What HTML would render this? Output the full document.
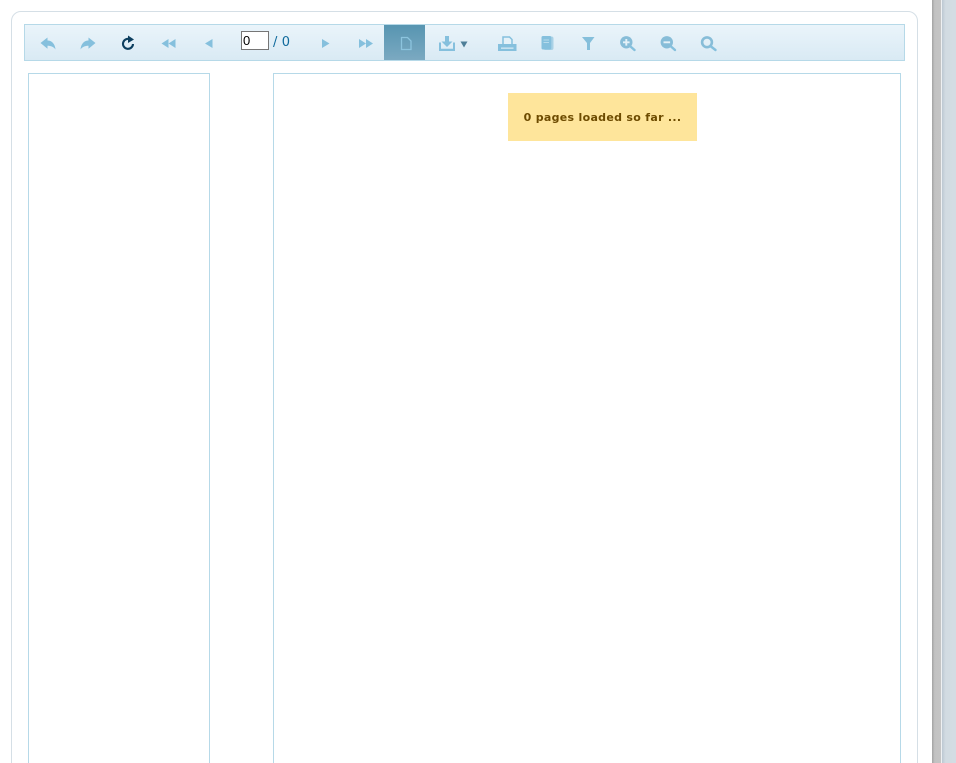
<!DOCTYPE html>
<html>
<head>
<meta charset="utf-8">
<style>
html,body{margin:0;padding:0;background:#fff;width:956px;height:763px;overflow:hidden;font-family:"DejaVu Sans","Liberation Sans",sans-serif}
#root{position:relative;width:956px;height:763px;overflow:hidden;background:#fff}
#root div,#root svg,#root input{position:absolute;box-sizing:border-box}
#card{left:11px;top:11px;width:907px;height:780px;border:1px solid #d5dfe6;border-radius:10px;background:#fff}
#bar{left:24px;top:24px;width:881px;height:37px;border:1px solid #b6d9e8;background:linear-gradient(#eaf4fa,#d9eaf4)}
#active{left:384px;top:25px;width:41px;height:35px;background:linear-gradient(#5795b1,#7ba9c1)}
#left{left:28px;top:73px;width:182px;height:720px;border:1px solid #b6d9e8;background:#fff}
#right{left:273px;top:73px;width:628px;height:720px;border:1px solid #b6d9e8;background:#fff}
#msg{left:508px;top:93px;width:189px;height:48px;background:#fee59b;color:#6d4b00;font-weight:bold;font-size:11px;letter-spacing:.3px;line-height:49px;text-align:center;white-space:nowrap}
#pg{left:241px;top:31px;width:28px;height:19px;border:1px solid #767676;background:#fff;font:13px "Liberation Sans",sans-serif;color:#000;padding:0 1px;margin:0;outline:0;border-radius:0}
#tot{left:273px;top:35px;font-size:13px;line-height:16px;letter-spacing:.1px;color:#0f6a9c;white-space:nowrap}
#s1{left:932px;top:0;width:9px;height:763px;background:linear-gradient(90deg,#a3a3a3,#c2c2c2 30%,#c4c4c4)}
#s2{left:941px;top:0;width:1px;height:763px;background:#eef0f2}
#s3{left:942px;top:0;width:14px;height:763px;background:linear-gradient(90deg,#bcc7d2,#d2dbe2 25%,#d3dce3)}
</style>
</head>
<body>
<div id="root">
<div id="card"></div>
<div id="bar"></div>
<div id="active"></div>
<div id="left"></div>
<div id="right"></div>
<div id="msg">0 pages loaded so far ...</div>
<input id="pg" type="text" value="0">
<div id="tot">/ 0</div>
<svg style="left:0;top:0" width="932" height="70" viewBox="0 0 932 70">
<g fill="#85c0dd">
<!-- undo -->
<path d="M40.500 43 L47.500 37.500 V40.500 C52 40.500 55 44 55.500 49.500 C53.500 46.800 51 45.800 47.500 45.800 V48.800 Z"/>
<!-- redo -->
<path d="M95.500 43 L88.500 37.500 V40.500 C84 40.500 81 44 80.500 49.500 C82.500 46.800 85 45.800 88.500 45.800 V48.800 Z"/>
<!-- first -->
<path d="M161.500 43.500 L168.500 39 V48 Z M168.500 43.500 L175.500 39 V48 Z"/>
<!-- prev -->
<path d="M205 43.500 L212.500 39 V48 Z"/>
<!-- next -->
<path d="M329.500 43.500 L322 39 V48 Z"/>
<!-- last -->
<path d="M366 43.500 L359 39 V48 Z M373 43.500 L366 39 V48 Z"/>
</g>
<!-- refresh -->
<path d="M130.500 39.500 A5 5 0 1 0 133 44" fill="none" stroke="#0d3f5f" stroke-width="2.100"/>
<path d="M128 35.500 L134 39.500 L128 43 Z" fill="#0d3f5f"/>
<!-- page (active) -->
<path d="M401.500 37.500 H407.500 L411 41 V49.500 H401.500 Z" fill="none" stroke="#8cc4de" stroke-width="1.300"/>
<!-- download -->
<g fill="#85c0dd">
<path d="M445 36 H449 V41.500 H452.500 L447 47 L441.500 41.500 H445 Z"/>
<path d="M439 42.500 H441 V48.800 H453 V42.500 H455 V51 H439 Z"/>
</g>
<path d="M460.500 41.500 H467.500 L464 47.500 Z" fill="#4e7f98"/>
<!-- print -->
<path d="M503 44 V37 H509.500 L512 39.500 V44" fill="#e4f1f8" stroke="#85c0dd" stroke-width="1.500"/>
<path d="M498 44 H516.500 V51 H498 Z" fill="#85c0dd"/>
<rect x="501" y="47.500" width="12.500" height="1.300" fill="#d5e9f3"/>
<!-- document copies -->
<rect x="543.500" y="36.500" width="10" height="13.500" rx="2" fill="#a9d2e6"/>
<rect x="541.500" y="36" width="9.800" height="13.500" rx="1.500" fill="#85c0dd"/>
<rect x="543.500" y="39.500" width="5.500" height="1" fill="#b7dbec"/>
<rect x="543.500" y="42" width="5.500" height="1" fill="#b7dbec"/>
<!-- filter -->
<path d="M582 37 H594.500 L590 43 V50 H587 V43 Z" fill="#85bfdb"/>
<!-- zoom in -->
<circle cx="626.300" cy="42.300" r="6.200" fill="#87bdd8"/>
<path d="M630.500 46.500 L634.500 50" fill="none" stroke="#85c0dd" stroke-width="2.400" stroke-linecap="round"/>
<path d="M623 42.300 H629.600 M626.300 39 V45.600" stroke="#e4f1f8" stroke-width="1.900" fill="none"/>
<!-- zoom out -->
<circle cx="666.800" cy="42.300" r="6.200" fill="#87bdd8"/>
<path d="M671 46.500 L675 50" fill="none" stroke="#85c0dd" stroke-width="2.400" stroke-linecap="round"/>
<path d="M663.500 42.300 H670.100" stroke="#e4f1f8" stroke-width="1.900" fill="none"/>
<!-- zoom -->
<circle cx="707" cy="42.300" r="4.900" fill="none" stroke="#87bdd8" stroke-width="2.600"/>
<path d="M711 46.500 L715.500 50" fill="none" stroke="#85c0dd" stroke-width="2.400" stroke-linecap="round"/>
</svg>
<div id="s1"></div>
<div id="s2"></div>
<div id="s3"></div>
</div>
</body>
</html>
